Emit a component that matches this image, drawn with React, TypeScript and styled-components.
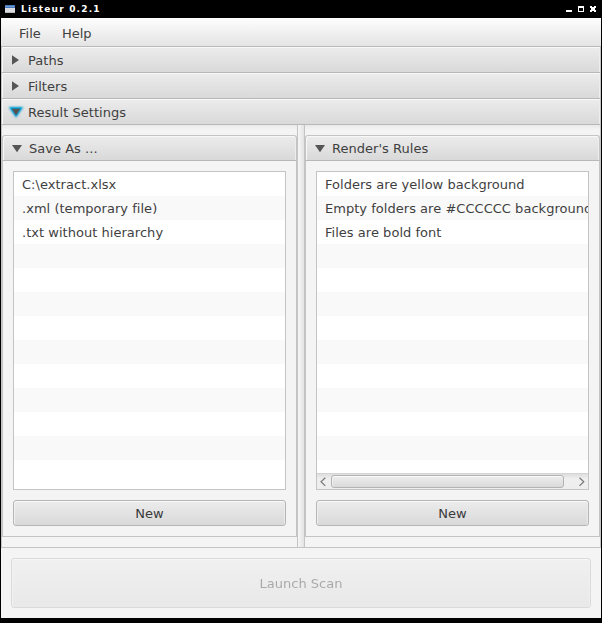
import React from 'react';
import styled, { createGlobalStyle } from 'styled-components';

const Global = createGlobalStyle`
  *, *::before, *::after { box-sizing: border-box; }
  html, body { margin: 0; padding: 0; background: #000; overflow: hidden; }
`;

const Window = styled.div`
  width: 602px;
  height: 623px;
  padding: 0 1px 5px;
  background: #000;
  display: flex;
  flex-direction: column;
  font: 13px/16px 'DejaVu Sans', sans-serif;
  letter-spacing: 0.03px;
  color: #3f3f3f;
  cursor: default;
`;

const TitleBar = styled.header`
  height: 18px;
  flex: none;
  display: flex;
  align-items: center;
  padding: 0 4px;
`;

const TitleText = styled.span`
  flex: 1;
  margin-left: 6px;
  color: #fff;
  font: bold 9px/18px 'DejaVu Sans', sans-serif;
  letter-spacing: 1.2px;
`;

const Scene = styled.main`
  flex: 1;
  min-height: 0;
  display: flex;
  flex-direction: column;
  background: #f4f4f4;
`;

const MenuBar = styled.nav`
  height: 29px;
  flex: none;
  display: flex;
  align-items: center;
  gap: 21px;
  padding: 4px 18px 0;
  border-bottom: 1px solid #b9b9b9;
  background: linear-gradient(#fdfdfd, #e4e4e4);
`;

const PaneTitle = styled.div<{ $inner?: boolean }>`
  height: 26px;
  flex: none;
  display: flex;
  align-items: center;
  padding: ${p => (p.$inner ? 1 : 2)}px 9px 0;
  gap: 5px;
  border: 1px solid #c4c4c4;
  border-top-width: ${p => (p.$inner ? 1 : 0)}px;
  border-bottom-color: #b8b8b8;
  border-radius: ${p => (p.$inner ? '3px 3px 0 0' : '0')};
  background: linear-gradient(#ececec, #d9d9d9);
  box-shadow: inset 1px 1px 0 #f8f8f8, inset -1px 0 0 #ededed;
`;

const ArrowBox = styled.svg`
  width: 12px;
  height: 14px;
  flex: none;
  overflow: visible;
`;

const SplitPane = styled.section`
  height: 423px;
  flex: none;
  display: grid;
  grid-template-columns: 295px 8px 295px;
  border: 1px solid #c4c4c4;
  border-top: 0;
  background: linear-gradient(#e9e9e9, #f4f4f4 5px);
`;

const Divider = styled.div`
  border: solid #c4c4c4;
  border-width: 0 1px;
  background: linear-gradient(90deg, #f7f7f7, #e3e3e3);
`;

const Side = styled.div`
  padding: 10px 0;
  min-width: 0;
`;

const TitledPane = styled.div`
  height: 402px;
  display: flex;
  flex-direction: column;
`;

const PaneBody = styled.div`
  flex: 1;
  display: flex;
  flex-direction: column;
  gap: 10px;
  padding: 10px;
  border: 1px solid #c4c4c4;
  border-top: 0;
  background: #f4f4f4;
`;

const List = styled.div`
  height: 319px;
  flex: none;
  display: flex;
  flex-direction: column;
  overflow: hidden;
  border: 1px solid #c4c4c4;
  background: #fff;
`;

const Rows = styled.ul`
  flex: 1;
  min-height: 0;
  overflow: hidden;
  margin: 0;
  padding: 0;
  list-style: none;
`;

const Row = styled.li`
  height: 24px;
  padding: 1px 8px 0;
  line-height: 24px;
  white-space: nowrap;
  font-variant-ligatures: none;
  &:nth-child(even) { background: #f9f9f9; }
`;

const ScrollBar = styled.div`
  height: 16px;
  flex: none;
  display: flex;
  align-items: center;
  border-top: 1px solid #d4d4d4;
  background: linear-gradient(#dedede, #efefef 5px, #ededed);
`;

const Chevron = styled.svg`
  width: 14px;
  height: 14px;
  flex: none;
`;

const Thumb = styled.div`
  width: 233px;
  height: 13px;
  margin-right: 10px;
  border: 1px solid #b3b3b3;
  border-radius: 3px;
  background: linear-gradient(#ededed, #dadada);
  box-shadow: inset 0 1px 0 #fafafa, inset 1px 0 0 #f0f0f0;
`;

const Button = styled.button<{ $large?: boolean }>`
  height: ${p => (p.$large ? 50 : 26)}px;
  flex: none;
  margin: ${p => (p.$large ? '10px 10px 0' : '0')};
  padding: 2px 0 0;
  border: 1px solid #b5b5b5;
  border-radius: 3px;
  background: linear-gradient(#ececec, #d9d9d9);
  box-shadow: inset 0 1px 0 #fafafa, inset 1px 0 0 #f0f0f0, inset -1px 0 0 #ebebeb;
  color: #3a3a3a;
  font: inherit;
  letter-spacing: inherit;
  &:disabled { opacity: 0.4; }
`;

function AppIcon() {
  return (
    <svg width="10" height="8" shapeRendering="crispEdges">
      <rect width="10" height="8" fill="#d9dce0" />
      <rect width="10" height="3" fill="#4678bd" />
      <rect y="1" width="9" height="1" fill="#6b9bd6" />
      <rect y="7" width="10" height="1" fill="#b9b9b9" />
    </svg>
  );
}

function WindowControls() {
  return (
    <svg width="32" height="8" shapeRendering="crispEdges" fill="#fff">
      <path d="M1 5h6v2h-6z" />
      <path fillRule="evenodd" d="M13 1h6v6h-6z M14 3v3h4v-3z" />
      <path d="M25 1h2v1h2v-1h2v2h-1v2h1v2h-2v-1h-2v1h-2v-2h1v-2h-1z" />
    </svg>
  );
}

function Arrow({ open, focused }: { open?: boolean; focused?: boolean }) {
  return (
    <ArrowBox viewBox="0 0 12 14">
      {focused && (
        <>
          <defs>
            <filter id="halo" x="-50%" y="-50%" width="200%" height="200%">
              <feGaussianBlur stdDeviation="1" />
            </filter>
          </defs>
          <path d="M-.5 2h11l-5.5 8z" fill="#039ed3" stroke="#039ed3" strokeWidth="2" filter="url(#halo)" />
          <path d="M-1 1.5h12l-6 9z" fill="#039ed3" fillOpacity="0.8" />
        </>
      )}
      {focused
        ? <path d="M.7 2.8h8.6l-4.3 6.8z" fill="#555" />
        : <path d={open ? 'M0 3h10l-5 7.2z' : 'M1 1.3v9.4l7-4.7z'} fill="#555" />}
    </ArrowBox>
  );
}

interface RulePanelProps {
  title: string;
  items: string[];
  scroll?: boolean;
}

function RulePanel({ title, items, scroll }: RulePanelProps) {
  const rows = [...items, ...Array(13 - items.length).fill('')];
  return (
    <Side>
      <TitledPane>
        <PaneTitle $inner><Arrow open />{title}</PaneTitle>
        <PaneBody>
          <List>
            <Rows>{rows.map((text, i) => <Row key={i}>{text}</Row>)}</Rows>
            {scroll && (
              <ScrollBar>
                <Chevron><path d="M8.3 2.7l-4.3 4.1 4.3 4.1" fill="none" stroke="#777" strokeWidth="1.2" /></Chevron>
                <Thumb />
                <Chevron><path d="M5.5 2.7l4.3 4.1-4.3 4.1" fill="none" stroke="#777" strokeWidth="1.2" /></Chevron>
              </ScrollBar>
            )}
          </List>
          <Button>New</Button>
        </PaneBody>
      </TitledPane>
    </Side>
  );
}

export default function App() {
  return (
    <Window>
      <Global />
      <TitleBar>
        <AppIcon />
        <TitleText>Listeur 0.2.1</TitleText>
        <WindowControls />
      </TitleBar>
      <Scene>
        <MenuBar><span>File</span><span>Help</span></MenuBar>
        <PaneTitle><Arrow />Paths</PaneTitle>
        <PaneTitle><Arrow />Filters</PaneTitle>
        <PaneTitle><Arrow open focused />Result Settings</PaneTitle>
        <SplitPane>
          <RulePanel title="Save As ..." items={['C:\\extract.xlsx', '.xml (temporary file)', '.txt without hierarchy']} />
          <Divider />
          <RulePanel
            title="Render's Rules"
            items={['Folders are yellow background', 'Empty folders are #CCCCCC background', 'Files are bold font']}
            scroll
          />
        </SplitPane>
        <Button $large disabled>Launch Scan</Button>
      </Scene>
    </Window>
  );
}
